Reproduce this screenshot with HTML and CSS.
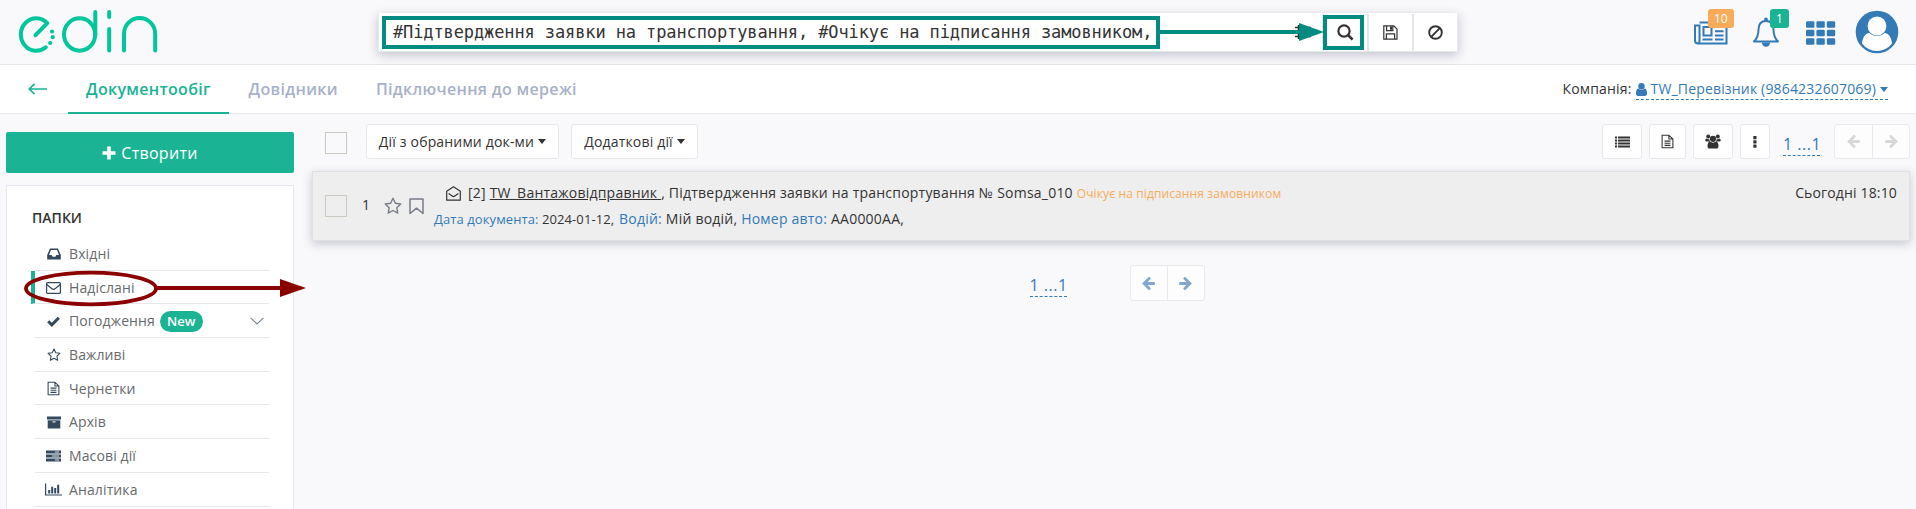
FILE: index.html
```html
<!DOCTYPE html>
<html lang="uk">
<head>
<meta charset="utf-8">
<title>EDIN</title>
<link rel="stylesheet" href="styles.css">
</head>
<body>
<svg class="defs" width="0" height="0">
  <symbol id="file" viewBox="0 0 14 16"><path d="M1.2 1.2h7.3l4.3 4.2v9.4H1.2z M8.5 1.2v4.2h4.3 M3.8 7.6h6.4 M3.8 9.9h6.4 M3.8 12.2h6.4" fill="none" stroke="currentColor" stroke-width="1.15"/></symbol>
  <symbol id="star" viewBox="0 0 18 17"><path d="M9 1.3l2.35 4.9 5.4.75-3.95 3.75.97 5.35L9 13.5l-4.77 2.55.97-5.35L1.25 6.95l5.4-.75z" fill="none" stroke="currentColor" stroke-width="1.4" stroke-linejoin="round"/></symbol>
  <symbol id="left" viewBox="0 0 12 12"><path d="M6.600 1.300L1.900 6l4.700 4.700M2.400 6h8.400" fill="none" stroke="currentColor" stroke-width="2.600" stroke-linecap="round"/></symbol>
  <symbol id="right" viewBox="0 0 12 12"><path d="M5.400 1.300l4.700 4.700-4.700 4.700M9.600 6H1.200" fill="none" stroke="currentColor" stroke-width="2.600" stroke-linecap="round"/></symbol>
</svg>

<header class="topbar">
  <svg class="logo" width="142" height="46" viewBox="17 8 142 46" fill="none" stroke="#00c79b" stroke-width="4" stroke-linecap="round" stroke-linejoin="round">
    <path d="M35.5 35.2L47.3 23.2A15.4 16.3 0 1 0 45.8 47.3"/>
    <ellipse cx="79.6" cy="34.5" rx="15.6" ry="16.2"/>
    <path d="M95.3 12v23M109.2 12v5M109.2 29v21.5M124 50.5V34a15.6 16 0 0 1 31.2 0v16.500"/>
    <g fill="#00c79b" stroke="none"><circle cx="52" cy="31.500" r="2.100"/><circle cx="52.7" cy="37.200" r="2.100"/><circle cx="50.200" cy="43" r="2.100"/></g>
  </svg>
  <div class="search">
    <div class="query">#Підтвердження заявки на транспортування, #Очікує на підписання замовником,</div>
    <div class="filter"><svg width="16" height="16" viewBox="0 0 16 16"><path d="M0 3.500h16M0 12.500h16M3.500 1v5M3.500 10v5" stroke="#333" stroke-width="1.500"/></svg></div>
    <button class="tool"><svg width="17" height="17" viewBox="0 0 17 17" fill="none" stroke="#333"><circle cx="7" cy="7" r="5.600" stroke-width="2.200"/><path d="M11 11l4.600 4.600" stroke-width="2.600"/></svg></button>
    <button class="tool"><svg width="15" height="15" viewBox="0 0 15 15" fill="none" stroke="#333" stroke-width="1.200"><path d="M.8.8h10l3.200 3.200v10.200H.8z M3.400 14V8.800h8.200V14M3.600 1v4.700h6.200V1"/><path d="M7 1.400h2v3.400H7z" fill="#333" stroke="none"/></svg></button>
    <button class="tool"><svg width="15" height="15" viewBox="0 0 15 15" fill="none" stroke="#333" stroke-width="1.900"><circle cx="7.500" cy="7.500" r="6.300"/><path d="M3.200 11.800l8.600-8.600"/></svg></button>
  </div>
  <div class="actions">
    <a class="news"><svg width="34" height="24" viewBox="0 0 34 24" fill="none" stroke="#337ab7" stroke-width="2"><path d="M5.500 1.500H32.500V22.500H4Q1 22.500 1 19.500V4.500H5.500V19.500Q5.500 22.500 3.500 22.500"/><path d="M9.500 6h8v8.500h-8zM8.500 18.500h10M21 10.200h8.500M21 14.400h8.500M21 18.500h8.500"/></svg><span class="badge orange">10</span></a>
    <a class="bell"><svg width="28" height="30" viewBox="0 0 28 30"><path d="M14 4C8.500 4 6.500 8 6.500 12.500C6.500 18 5 21.500 2 24.500H26C23 21.500 21.500 18 21.500 12.500C21.500 8 19.500 4 14 4Z" fill="none" stroke="#337ab7" stroke-width="2" stroke-linejoin="round"/><path d="M12.200 4V2.300a1.800 1.800 0 0 1 3.600 0V4zM9.800 25.500a4.200 4.200 0 0 0 8.400 0z" fill="#337ab7"/></svg><span class="badge green">1</span></a>
    <svg class="grid" width="30" height="24" viewBox="0 0 30 24" fill="#337ab7"><rect width="8.400" height="6.500" y=".3" rx="1.300"/><rect x="10.400" width="8.400" height="6.500" y=".3" rx="1.300"/><rect x="20.800" width="8.400" height="6.500" y=".3" rx="1.300"/><rect width="8.400" height="6.500" y="8.800" rx="1.300"/><rect x="10.400" width="8.400" height="6.500" y="8.800" rx="1.300"/><rect x="20.800" width="8.400" height="6.500" y="8.800" rx="1.300"/><rect width="8.400" height="6.500" y="17.200" rx="1.300"/><rect x="10.400" width="8.400" height="6.500" y="17.200" rx="1.300"/><rect x="20.800" width="8.400" height="6.500" y="17.200" rx="1.300"/></svg>
    <svg class="avatar" width="44" height="44" viewBox="0 0 44 44"><circle cx="22" cy="22" r="21.300" fill="#337ab7"/><path d="M7 33.500c.5-6 3-10 7.300-10.500 4.500 4 10.900 4 15.400 0 4.300.5 6.800 4.500 7.300 10.500A18.900 18.900 0 0 1 7 33.500z" fill="#fff"/><circle cx="22" cy="16" r="9.400" fill="#fff"/></svg>
  </div>
</header>

<nav class="nav">
  <svg class="back" width="20" height="12" viewBox="0 0 20 12" fill="none" stroke="#1ab394" stroke-width="1.700"><path d="M6.500.8L1.300 6l5.200 5.200M1.500 6H19"/></svg>
  <a class="tab active">Документообіг</a>
  <a class="tab">Довідники</a>
  <a class="tab">Підключення до мережі</a>
  <div class="company">Компанія:<a class="company-link"><svg width="11" height="13" viewBox="0 0 11 13" fill="#337ab7"><circle cx="5.500" cy="3.200" r="3.200"/><path d="M2.200 5.600c2 1.600 4.600 1.600 6.600 0C10.500 6 11 8 11 10.300c0 1.600-.8 2.700-2 2.700H2c-1.200 0-2-1.100-2-2.700C0 8 .5 6 2.200 5.600z"/></svg><span>TW_Перевізник (9864232607069)</span><i class="caret"></i></a></div>
</nav>

<div class="layout">
  <aside class="sidebar">
    <button class="create"><svg width="14" height="14" viewBox="0 0 14 14"><path d="M7 .5v13M.5 7h13" stroke="#fff" stroke-width="3.600"/></svg>Створити</button>
    <section class="folders">
      <h2>ПАПКИ</h2>
      <ul>
        <li><svg width="14" height="12" viewBox="0 0 14 12"><path d="M3 .5h8L13.800 7v4.500H.2V7z" fill="#34495e"/><path d="M4 2h6l2 5H9.300l-.9 1.800H5.600L4.700 7H2z" fill="#fff"/></svg>Вхідні</li>
        <li class="current"><svg width="15" height="12" viewBox="0 0 15 12" fill="none" stroke="#34495e" stroke-width="1.200"><rect x=".6" y=".6" width="13.800" height="10.800" rx="1"/><path d="M.8 2.500l5.200 4.200q1.500 1.200 3 0l5.200-4.200"/></svg>Надіслані</li>
        <li><svg width="13" height="11" viewBox="0 0 13 11"><path d="M1.200 5.300l3.600 3.600 7-7.200" fill="none" stroke="#34495e" stroke-width="3"/></svg>Погодження<span class="new">New</span><svg class="chev" width="14" height="8" viewBox="0 0 14 8"><path d="M.6.800l6.400 6.200 6.400-6.200" fill="none" stroke="#788594" stroke-width="1.100"/></svg></li>
        <li><svg width="14" height="13"><use href="#star"/></svg>Важливі</li>
        <li><svg width="13" height="15"><use href="#file"/></svg>Чернетки</li>
        <li><svg width="14" height="13" viewBox="0 0 14 13" fill="#34495e"><path d="M0 .5h14v3H0z"/><path d="M.7 4.300h12.600v8.200H.7z"/><path d="M5.500 5.400h3v1h-3z" fill="#fff"/></svg>Архів</li>
        <li><svg width="15" height="12" viewBox="0 0 15 12"><path d="M0 .5h15v3H0zM0 4.500h15v3H0zM0 8.500h15v3H0z" fill="#34495e"/><path d="M9 2h4M6 6h7M9 10h4" stroke="#dfe3e8"/></svg>Масові дії</li>
        <li><svg width="17" height="13" viewBox="0 0 17 13" fill="#34495e"><path d="M0 .5h1.200v11H17v1.100H0z"/><path d="M3.200 7h2v3.500h-2zM6.200 3.800h2v6.700h-2zM9.200 5h2v5.500h-2zM12.200 1.800h2v8.700h-2z"/></svg>Аналітика</li>
      </ul>
    </section>
  </aside>

  <main class="main">
    <div class="toolbar">
      <span class="check"></span>
      <button class="btn bulk">Дії з обраними док-ми<i class="caret"></i></button>
      <button class="btn extra">Додаткові дії<i class="caret"></i></button>
      <div class="view">
        <button class="btn icon w40"><svg width="15" height="12" viewBox="0 0 15 12" fill="#333"><path d="M0 .5h2v2H0zM3 .5h12v2H3zM0 3.500h2v2H0zM3 3.500h12v2H3zM0 6.500h2v2H0zM3 6.500h12v2H3zM0 9.500h2v2H0zM3 9.500h12v2H3z"/></svg></button>
        <button class="btn icon w37"><svg width="13" height="15"><use href="#file"/></svg></button>
        <button class="btn icon w40"><svg width="16" height="15" viewBox="0 0 16 15" fill="#333"><circle cx="3.200" cy="2.500" r="2"/><circle cx="12.800" cy="2.500" r="2"/><circle cx="8" cy="4.800" r="3.100"/><path d="M1.500 4.500c1 .7 2 .8 2.800.4.1 1.100.4 2 .8 2.600H1.200C-.2 7.500 0 4.800 1.500 4.500zM14.500 4.500c-1 .7-2 .8-2.800.4-.1 1.100-.4 2-.8 2.600h3.900c1.400 0 1.200-2.700-.3-3zM5 7.500c2 1.500 4 1.500 6 0 1.800.3 2.500 2.300 2.500 4.700 0 1.500-.8 2.300-2 2.300h-7c-1.200 0-2-.8-2-2.300C2.500 9.800 3.200 7.800 5 7.500z"/></svg></button>
        <button class="btn icon w30"><svg width="4" height="12" viewBox="0 0 4 12" fill="#333"><rect x=".3" width="3.200" height="3.200" rx=".5"/><rect x=".3" y="4.300" width="3.200" height="3.200" rx=".5"/><rect x=".3" y="8.600" width="3.200" height="3.200" rx=".5"/></svg></button>
        <a class="range">1 ...1</a>
        <div class="pager off"><span><svg width="13" height="13"><use href="#left"/></svg></span><span><svg width="13" height="13"><use href="#right"/></svg></span></div>
      </div>
    </div>

    <article class="row">
      <span class="check"></span>
      <span class="num">1</span>
      <svg class="fav" width="18" height="17"><use href="#star"/></svg>
      <svg class="mark" width="15" height="17" viewBox="0 0 15 17"><path d="M1 1h13v14.500l-6.500-5.300L1 15.500z" fill="none" stroke="#777c86" stroke-width="1.500" stroke-linejoin="round"/></svg>
      <div class="info">
        <p class="line first"><svg width="15" height="15" viewBox="0 0 15 15" fill="none" stroke="#333" stroke-width="1.200"><path d="M.7 5.200L7.500.8l6.800 4.400v9H.7z" stroke-linejoin="round"/><path d="M2.600 7.600l3.600 2.500q1.300.9 2.600 0l3.600-2.500"/></svg><span>[2] <u>TW_Вантажовідправник </u>, Підтвердження заявки на транспортування № Somsa_010 <small>Очікує на підписання замовником</small></span></p>
        <p class="line second"><span class="sm"><b>Дата документа:</b> 2024-01-12,</span> <b>Водій:</b> Мій водій, <b>Номер авто:</b> AA0000AA,</p>
      </div>
      <time>Сьогодні 18:10</time>
    </article>

    <footer class="bottom">
      <a class="range">1 ...1</a>
      <div class="pager"><span><svg width="13" height="13"><use href="#left"/></svg></span><span><svg width="13" height="13"><use href="#right"/></svg></span></div>
    </footer>
  </main>
</div>

<svg class="notes" width="1916" height="509" viewBox="0 0 1916 509" fill="none">
  <g stroke="#008c82" stroke-width="4"><path d="M384 18h774v29H384zM1325 17h37v31h-37zM1160 32h142"/></g>
  <path d="M1299 23l25 9-25 9z" fill="#008c82"/>
  <ellipse cx="91" cy="288.500" rx="65" ry="15.800" stroke="#8b0000" stroke-width="3.800"/>
  <path d="M156 288h126" stroke="#8b0000" stroke-width="4"/>
  <path d="M280 279l26 9-26 9z" fill="#8b0000"/>
</svg>
</body>
</html>
```

FILE: styles.css
```css
* { box-sizing: border-box; }
body { margin: 0; height: 509px; overflow: hidden; background: #f9f9fb; color: #333; font: 14px/20px "Open Sans", "Noto Sans", sans-serif; }
button { font: inherit; color: inherit; margin: 0; padding: 0; border: 0; }
svg { display: block; flex: none; }
.defs { position: absolute; }
.notes { position: absolute; left: 0; top: 0; pointer-events: none; }

.topbar { height: 65px; display: flex; align-items: flex-start; border-bottom: 1px solid #e4e7ed; }
.logo { margin: 8px 0 0 17px; }
.search { margin: 13px 0 0 219px; width: 1080px; height: 39px; display: flex; background: #fff; border: 1px solid #e7eaec; border-top-color: #fff; box-shadow: 0 3px 10px rgba(50, 50, 93, .28); }
.query { padding-left: 14px; flex: 1; white-space: pre; font: 17px/36px "DejaVu Sans Mono", monospace; letter-spacing: -.11px; }
.filter { padding: 10px 11px 0 0; }
.tool { width: 45px; display: flex; align-items: center; justify-content: center; background: #fff; border-left: 2px solid #e5e6e7; }
.actions { flex: 1; display: flex; padding-left: 236px; }
.news, .bell { position: relative; }
.news { margin-top: 21px; }
.bell { margin: 17px 0 0 24px; }
.grid { margin: 21px 0 0 26px; }
.avatar { margin: 10px 0 0 19px; }
.badge { position: absolute; height: 19px; padding: 0 6px; border-radius: 3px; color: #fff; font-size: 12px; line-height: 19px; }
.orange { left: 14px; top: -12px; background: #f8ac59; }
.green { left: 18px; top: -8px; background: #1ab394; }

.nav { height: 49px; display: flex; background: #fff; border-bottom: 1px solid #e4e7ed; }
.back { margin: 18px 20px 0 28px; }
.tab { height: 49px; padding: 0 18px; margin-right: 2px; font-size: 16px; line-height: 48px; font-weight: 600; letter-spacing: .32px; color: #a7b1c8; }
.active { color: #1ab394; border-bottom: 2px solid #1ab394; }
.company { display: flex; align-items: flex-start; margin: 14px 28px 0 auto; letter-spacing: .17px; }
.company-link { display: flex; align-items: center; gap: 4px; margin-left: 4px; color: #337ab7; border-bottom: 1px dashed #337ab7; }
.caret { display: inline-block; border: 4px solid transparent; border-top: 5px solid currentColor; border-bottom: 0; vertical-align: middle; }

.layout { display: flex; height: 395px; }
.sidebar { width: 288px; margin: 18px 0 0 6px; }
.create { width: 100%; height: 41px; display: flex; align-items: center; justify-content: center; gap: 5px; border-radius: 2px; background: #1ab394; color: #fff; font-size: 16px; letter-spacing: .3px; }
.folders { height: 324px; margin-top: 12px; padding: 22px 24px 0 25px; background: #fff; border: 1px solid #e7e7f3; border-bottom: 0; }
.folders h2 { margin: 0 0 9px; font-size: 14px; line-height: 20px; font-weight: 600; }
.folders ul { margin: 0 0 0 3px; padding: 0; list-style: none; }
.folders li { height: 33.700px; padding-top: 1px; display: grid; grid-template-columns: 34px auto auto 1fr; align-items: center; border-bottom: 1px solid #e4e6ea; color: #676a6c; letter-spacing: .12px; }
.folders li > svg:first-child { justify-self: center; margin-left: 3px; color: #34495e; }
.folders .current { margin-left: -4px; border-left: 4px solid #1ab394; }
.new { margin-left: 5px; padding: 0 7px; height: 21px; border-radius: 11px; background: #1ab394; color: #fff; font-size: 13px; line-height: 20px; font-weight: 600; }
.folders .chev { justify-self: end; margin-right: 5px; }

.main { flex: 1; padding: 10px 6px 0 18px; }
.toolbar { display: flex; height: 35px; padding-left: 13px; }
.check { width: 22px; height: 22px; border: 1px solid #ccc9c1; flex: none; }
.toolbar .check { margin-top: 8px; }
.btn { height: 35px; display: flex; align-items: center; justify-content: center; gap: 4px; background: #fff; border: 1px solid #e7e7ec; border-radius: 3px; white-space: nowrap; letter-spacing: .17px; }
.bulk { width: 193px; margin-left: 19px; }
.extra { width: 127px; margin-left: 12px; }
.view { display: flex; margin-left: auto; gap: 7px; }
.w40 { width: 40px; }
.w37 { width: 37px; }
.w30 { width: 30px; }
.range { width: 37px; color: #337ab7; font-size: 16px; line-height: 22px; letter-spacing: .5px; border-bottom: 1px dashed #337ab7; white-space: nowrap; }
.view .range { margin: 9px 7px 0 6px; height: 23px; }
.pager { display: flex; border: 1px solid #e8e9ed; border-radius: 3px; background: #fdfdfe; color: #84a5cf; }
.pager span { display: flex; align-items: center; justify-content: center; width: 36px; }
.pager span + span { width: 37px; border-left: 1px solid #e8e9ed; }
.view .pager span { width: 37px; }
.off { color: #d8d8d8; }

.row { height: 70px; margin-top: 12px; display: flex; align-items: flex-start; padding: 0 13px; background: #eee; border: 1px solid #dfe0e2; box-shadow: 0 3px 9px rgba(50, 50, 93, .25); }
.row .check { margin: 23px 0 0 -1px; }
.num { margin: 23px 0 0 15px; width: 23px; }
.fav { margin: 25px 0 0 -1px; color: #777c86; }
.mark { margin: 26px 0 0 7px; }
.info { margin-left: 10px; }
.line { margin: 0; height: 26px; line-height: 26px; white-space: nowrap; letter-spacing: .22px; }
.first { margin-top: 8px; padding-left: 12px; display: flex; align-items: center; gap: 7px; }
.line b { font-weight: 400; color: #337ab7; }
.line small { font-size: 12px; letter-spacing: .12px; color: #f8ac59; }
.sm { margin-right: 1px; font-size: 13px; letter-spacing: .09px; }
.row time { margin: 11px -1px 0 auto; letter-spacing: .15px; }

.bottom { display: flex; justify-content: center; gap: 63px; margin-top: 24px; padding-left: 12px; }
.bottom .range { margin-top: 9px; height: 23px; }
.bottom .pager { height: 36px; }
```
